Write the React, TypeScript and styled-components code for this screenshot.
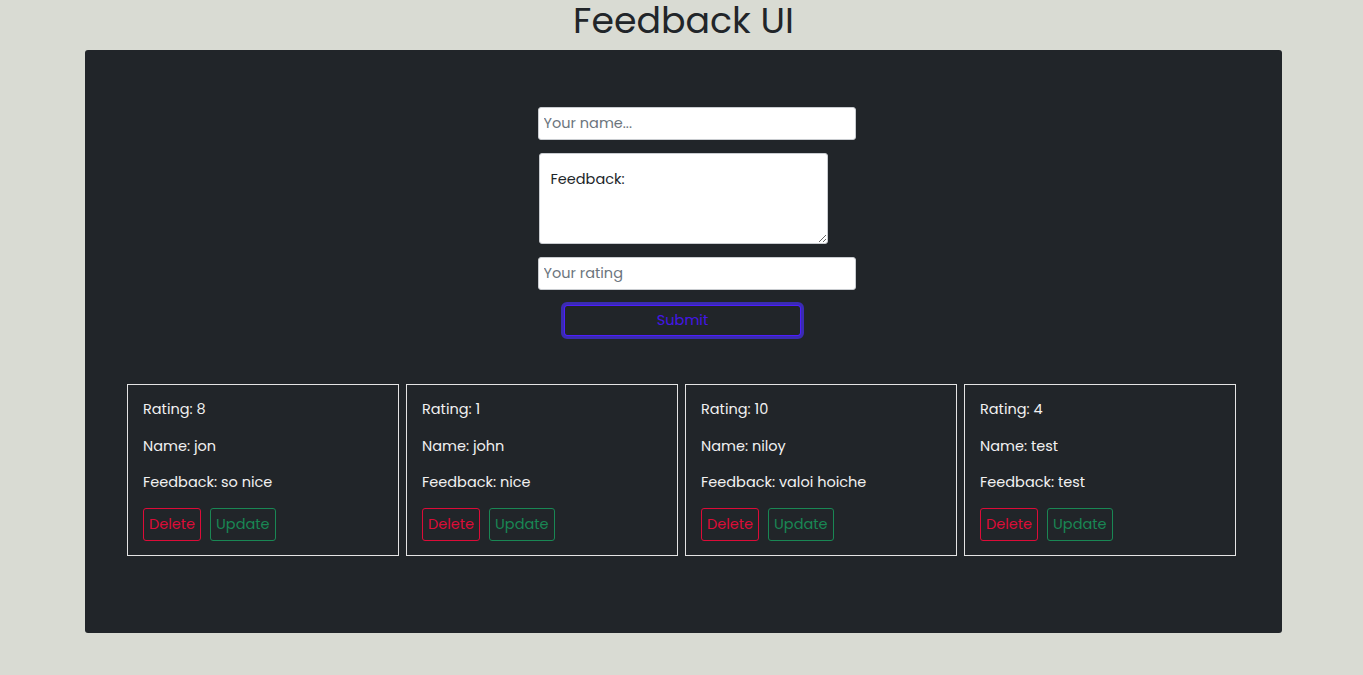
import React from 'react';
import {createGlobalStyle, styled} from 'styled-components';

interface FeedbackItem {
  rating: number;
  name: string;
  feedback: string;
}

const feedbacks: FeedbackItem[] = [
  {rating: 8, name: 'jon', feedback: 'so nice'},
  {rating: 1, name: 'john', feedback: 'nice'},
  {rating: 10, name: 'niloy', feedback: 'valoi hoiche'},
  {rating: 4, name: 'test', feedback: 'test'},
];

export default function App() {
  return (
    <>
      <GlobalStyle />
      <Page>
        <Title>Feedback UI</Title>
        <Panel>
          <Form onSubmit={e => e.preventDefault()}>
            <TextInput type="text" placeholder="Your name..." />
            <FeedbackArea defaultValue="Feedback:" />
            <TextInput type="text" placeholder="Your rating" />
            <SubmitButton type="submit">Submit</SubmitButton>
          </Form>
          <CardList>
            {feedbacks.map(item => (
              <Card key={item.name}>
                <Line>Rating: {item.rating}</Line>
                <Line>Name: {item.name}</Line>
                <Line>Feedback: {item.feedback}</Line>
                <Actions>
                  <ActionButton $variant="delete">Delete</ActionButton>
                  <ActionButton $variant="update">Update</ActionButton>
                </Actions>
              </Card>
            ))}
          </CardList>
        </Panel>
      </Page>
    </>
  );
}

const GlobalStyle = createGlobalStyle`
  * {
    box-sizing: border-box;
  }
  body {
    margin: 0;
    background: #d9dbd3;
    font-family: Poppins, Inter, 'Noto Sans', sans-serif;
  }
`;

const Page = styled.div`
  display: flex;
  flex-direction: column;
  align-items: center;
  min-height: 675px;
  padding-left: 4px;
`;

const Title = styled.h1`
  margin: 0;
  height: 50px;
  padding-top: 1px;
  line-height: 40px;
  font-size: 36.3px;
  font-weight: 400;
  color: #212529;
`;

const Panel = styled.div`
  width: 1197px;
  height: 583px;
  background: #212529;
  border-radius: 3px;
  padding-top: 57px;
  display: flex;
  flex-direction: column;
  align-items: center;
`;

const Form = styled.form`
  display: flex;
  flex-direction: column;
  align-items: flex-start;
  width: 348px;
  padding-left: 29px;
  margin-left: -2px;
`;

const TextInput = styled.input`
  width: 318px;
  height: 33px;
  padding: 0 5px;
  border: 1px solid #c9ccd0;
  border-radius: 3px;
  background: #fff;
  font-family: inherit;
  font-size: 14.5px;
  color: #212529;
  margin-bottom: 13px;

  &::placeholder {
    color: #6c757d;
  }
`;

const FeedbackArea = styled.textarea`
  margin-left: 1px;
  width: 289px;
  height: 91px;
  padding: 15px 11px;
  border: 1px solid #c9ccd0;
  border-radius: 3px;
  background: #fff;
  font-family: inherit;
  font-size: 14.5px;
  color: #212529;
  margin-bottom: 13px;
  resize: both;
`;

const SubmitButton = styled.button`
  align-self: center;
  margin-left: -29px;
  width: 243px;
  height: 37px;
  margin-top: -1px;
  background: transparent;
  border: 4px solid #3a2bb2;
  outline: 1px solid #4d1dff;
  outline-offset: -4px;
  border-radius: 6px;
  color: #4416e8;
  font-family: inherit;
  font-size: 14.5px;
  cursor: pointer;
`;

const CardList = styled.div`
  display: flex;
  gap: 7px;
  margin-top: 45px;
  margin-right: 4px;
`;

const Card = styled.div`
  width: 272px;
  height: 172px;
  border: 1px solid #e4e4e4;
  padding: 13px 15px 0;
  color: #f1f1f1;
`;

const Line = styled.p`
  margin: 0 0 14.5px;
  font-size: 14.5px;
  line-height: 22px;
`;

const Actions = styled.div`
  display: flex;
  gap: 9px;
  margin-top: 1px;
`;

const ActionButton = styled.button<{$variant: 'delete' | 'update'}>`
  height: 33px;
  padding: 0 5px;
  background: transparent;
  border: 1px solid ${p => (p.$variant === 'delete' ? '#dc0c38' : '#198754')};
  color: ${p => (p.$variant === 'delete' ? '#dc0c38' : '#198754')};
  border-radius: 3px;
  font-family: inherit;
  font-size: 14.5px;
  cursor: pointer;
`;
